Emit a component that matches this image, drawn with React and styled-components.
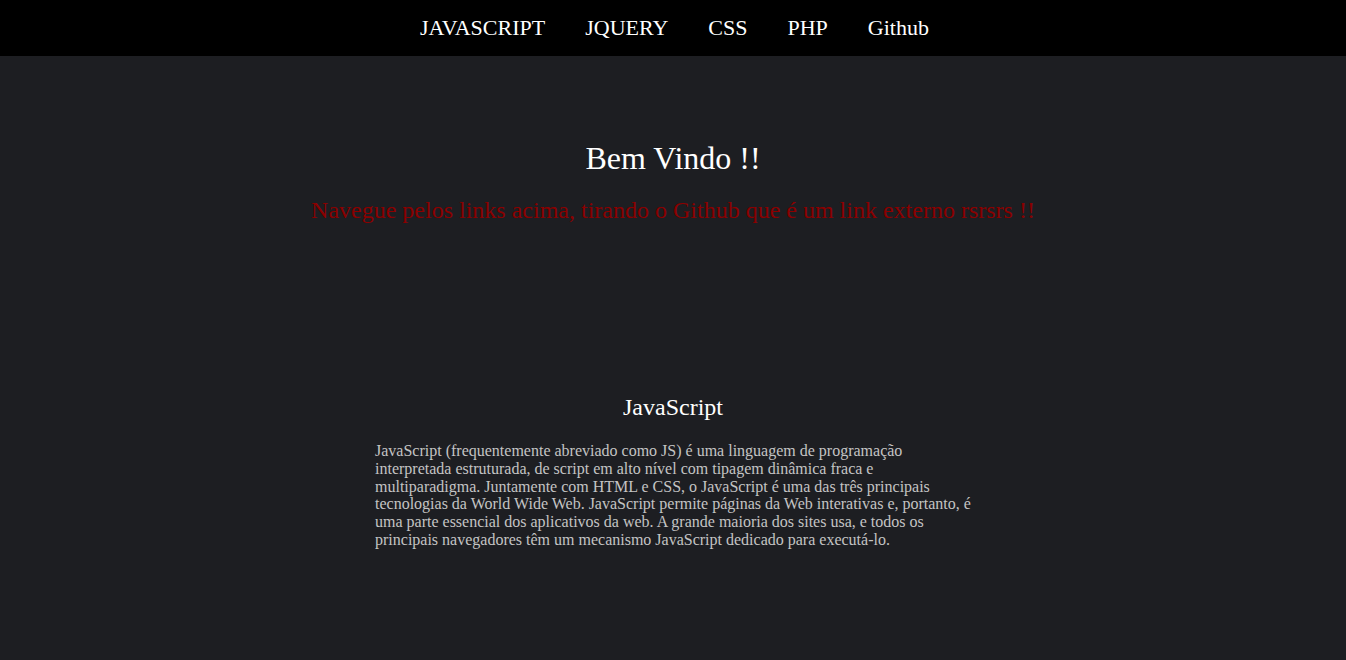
import React from 'react';
import { styled, createGlobalStyle } from 'styled-components';

const GlobalStyle = createGlobalStyle`
    body {
        margin: 0;
        background: #1d1e22;
        font-family: "Liberation Serif", "Times New Roman", serif;
    }
`

const NavBar = styled.nav`
    height: 56px;
    background: #000;
    display: flex;
    justify-content: center;
    align-items: center;
    gap: 40px;
    padding-left: 3px;
`
const NavLink = styled.a`
    color: #fff;
    font-size: 22px;
    text-decoration: none;
    cursor: pointer;
    margin-top: -1px;
`
const Welcome = styled.section`
    padding-top: 84px;
    text-align: center;
`
const Title = styled.h1`
    margin: 0;
    color: #fff;
    font-size: 32px;
    font-weight: normal;
`
const Subtitle = styled.h2`
    margin: 20px 0 0;
    color: #8b0000;
    font-size: 24px;
    font-weight: normal;
`
const Article = styled.article`
    width: 600px;
    margin: 170px auto 0;
`
const ArticleTitle = styled.h3`
    margin: 0 0 21px;
    color: #fff;
    font-size: 24px;
    font-weight: normal;
    text-align: center;
`
const ArticleText = styled.p`
    margin: 0;
    padding-left: 2px;
    color: #c4c4c4;
    font-size: 16px;
    line-height: 17.8px;
`

const links = ['JAVASCRIPT', 'JQUERY', 'CSS', 'PHP', 'Github'];

const App = () => {
    return (
        <>
            <GlobalStyle />
            <NavBar>
                {links.map((link) => (
                    <NavLink key={link}>{link}</NavLink>
                ))}
            </NavBar>
            <Welcome>
                <Title>Bem Vindo !!</Title>
                <Subtitle>Navegue pelos links acima, tirando o Github que é um link externo rsrsrs !!</Subtitle>
            </Welcome>
            <Article>
                <ArticleTitle>JavaScript</ArticleTitle>
                <ArticleText>
                    JavaScript (frequentemente abreviado como JS) é uma linguagem de programação interpretada estruturada, de script em alto nível com tipagem dinâmica fraca e multiparadigma. Juntamente com HTML e CSS, o JavaScript é uma das três principais tecnologias da World Wide Web. JavaScript permite páginas da Web interativas e, portanto, é uma parte essencial dos aplicativos da web. A grande maioria dos sites usa, e todos os principais navegadores têm um mecanismo JavaScript dedicado para executá-lo.
                </ArticleText>
            </Article>
        </>
    );
};

export default App;
